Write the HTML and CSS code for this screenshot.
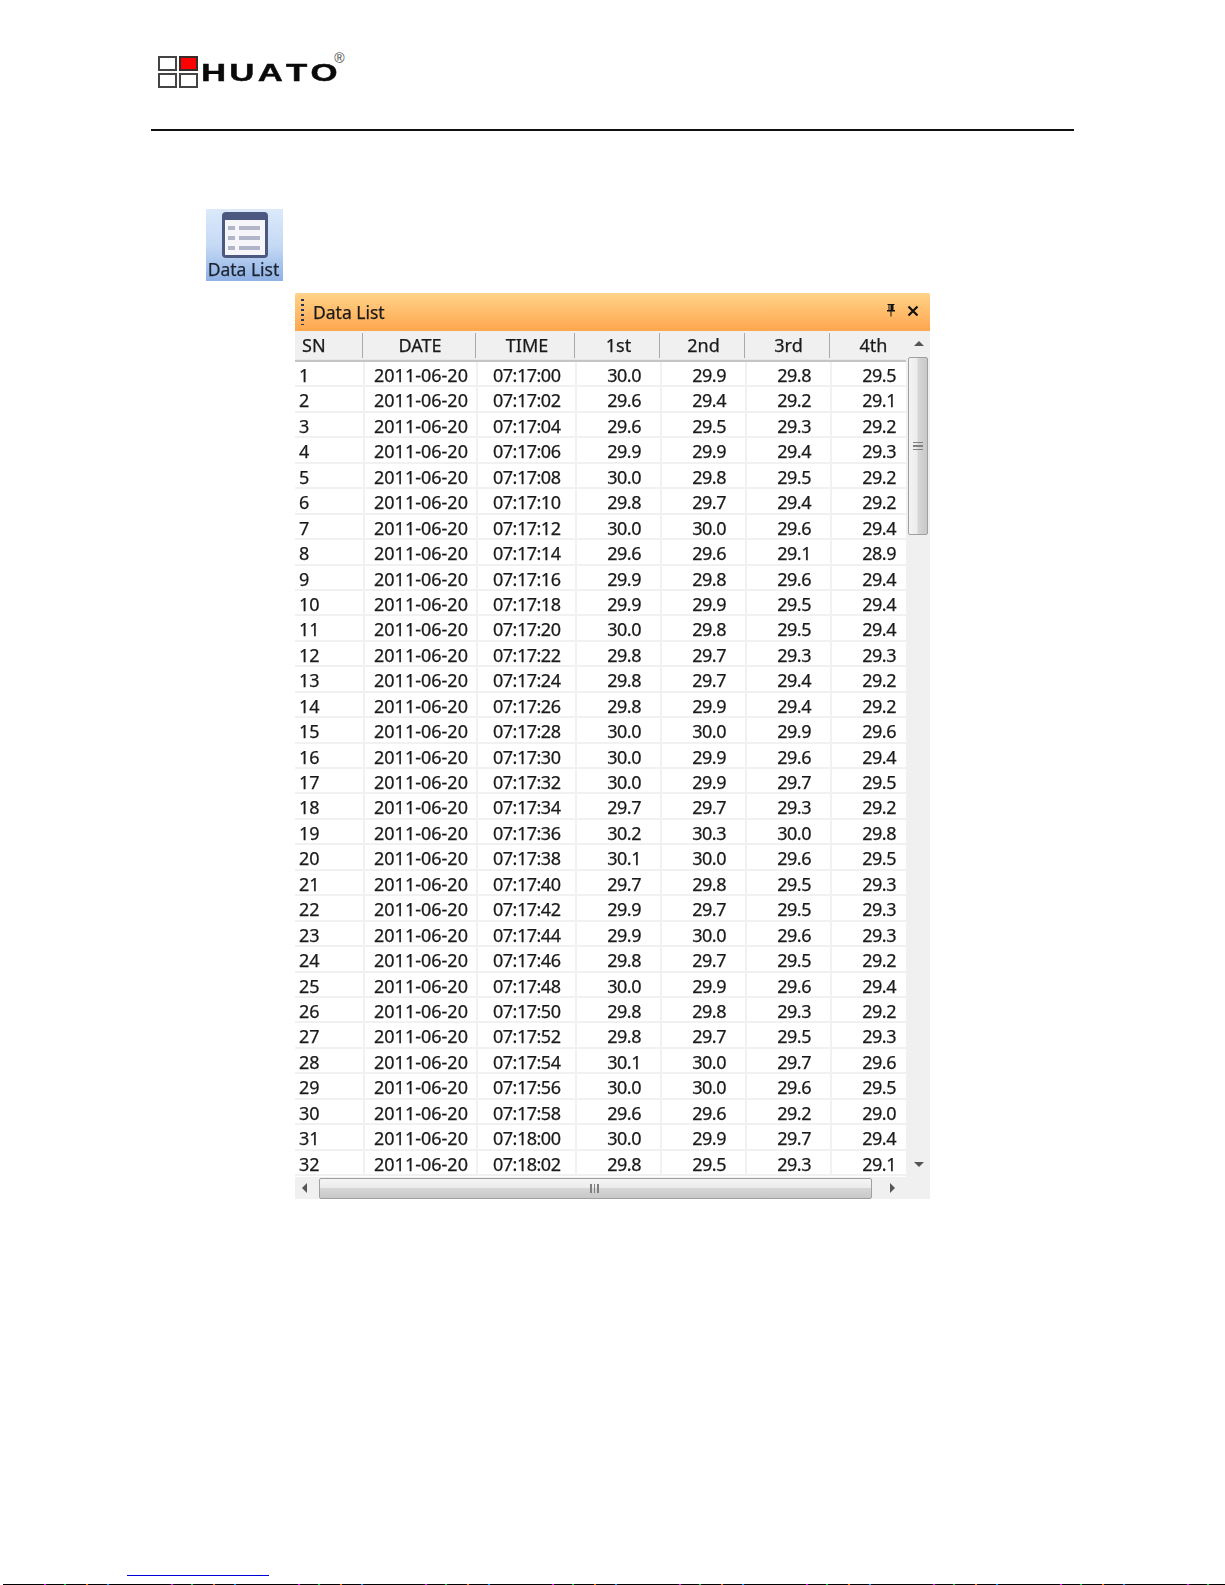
FILE: index.html
```html
<!DOCTYPE html>
<html lang="en">
<head>
<meta charset="utf-8">
<title>Data List</title>
<link rel="stylesheet" href="styles.css">
</head>
<body>
<div class="page">
  <header class="brand">
    <div class="squares"><i></i><i class="red"></i><i></i><i></i></div>
    <span class="brand-name">HUAT<span class="brand-end">O</span></span>
    <span class="reg">®</span>
  </header>
  <div class="rule"></div>
  <div class="tile">
    <svg class="tile-icon" viewBox="0 0 46 46" width="46" height="46">
      <rect x="0" y="0" width="46" height="46" rx="4" fill="#4d5880"/>
      <rect x="3" y="8" width="40" height="35" fill="#f6f6fa"/>
      <g fill="#b1b5c9">
        <rect x="6" y="14" width="7" height="4"/><rect x="17" y="14" width="21" height="4"/>
        <rect x="6" y="24" width="7" height="4"/><rect x="17" y="24" width="21" height="4"/>
        <rect x="6" y="34" width="7" height="4"/><rect x="17" y="34" width="21" height="4"/>
      </g>
    </svg>
    <span class="tile-label">Data List</span>
  </div>
  <section class="panel">
    <div class="titlebar">
      <span class="grip"></span>
      <span class="title">Data List</span>
      <svg class="pin" viewBox="0 0 12 14" width="12" height="14"><path d="M2.500 1h7v1h-1v5h1.500v1.500h-3.500v5h-1v-5h-3.500v-1.500h1.500v-5h-1zM4.500 2v5h1v-5z" fill="#111"/></svg>
      <svg class="close" viewBox="0 0 12 12" width="12" height="12"><path d="M1.500 1.500l9 9M10.500 1.500l-9 9" stroke="#111" stroke-width="2.200" fill="none"/></svg>
    </div>
    <div class="body">
      <div class="grid">
        <div class="head">
          <span class="hc hc-sn">SN</span><span class="hc hc-date">DATE</span><span class="hc hc-time">TIME</span><span class="hc hc-n">1st</span><span class="hc hc-n">2nd</span><span class="hc hc-n">3rd</span><span class="hc hc-n">4th</span>
        </div>
        <div class="row"><span>1</span><span>2011-06-20</span><span>07:17:00</span><span>30.0</span><span>29.9</span><span>29.8</span><span>29.5</span></div>
        <div class="row"><span>2</span><span>2011-06-20</span><span>07:17:02</span><span>29.6</span><span>29.4</span><span>29.2</span><span>29.1</span></div>
        <div class="row"><span>3</span><span>2011-06-20</span><span>07:17:04</span><span>29.6</span><span>29.5</span><span>29.3</span><span>29.2</span></div>
        <div class="row"><span>4</span><span>2011-06-20</span><span>07:17:06</span><span>29.9</span><span>29.9</span><span>29.4</span><span>29.3</span></div>
        <div class="row"><span>5</span><span>2011-06-20</span><span>07:17:08</span><span>30.0</span><span>29.8</span><span>29.5</span><span>29.2</span></div>
        <div class="row"><span>6</span><span>2011-06-20</span><span>07:17:10</span><span>29.8</span><span>29.7</span><span>29.4</span><span>29.2</span></div>
        <div class="row"><span>7</span><span>2011-06-20</span><span>07:17:12</span><span>30.0</span><span>30.0</span><span>29.6</span><span>29.4</span></div>
        <div class="row"><span>8</span><span>2011-06-20</span><span>07:17:14</span><span>29.6</span><span>29.6</span><span>29.1</span><span>28.9</span></div>
        <div class="row"><span>9</span><span>2011-06-20</span><span>07:17:16</span><span>29.9</span><span>29.8</span><span>29.6</span><span>29.4</span></div>
        <div class="row"><span>10</span><span>2011-06-20</span><span>07:17:18</span><span>29.9</span><span>29.9</span><span>29.5</span><span>29.4</span></div>
        <div class="row"><span>11</span><span>2011-06-20</span><span>07:17:20</span><span>30.0</span><span>29.8</span><span>29.5</span><span>29.4</span></div>
        <div class="row"><span>12</span><span>2011-06-20</span><span>07:17:22</span><span>29.8</span><span>29.7</span><span>29.3</span><span>29.3</span></div>
        <div class="row"><span>13</span><span>2011-06-20</span><span>07:17:24</span><span>29.8</span><span>29.7</span><span>29.4</span><span>29.2</span></div>
        <div class="row"><span>14</span><span>2011-06-20</span><span>07:17:26</span><span>29.8</span><span>29.9</span><span>29.4</span><span>29.2</span></div>
        <div class="row"><span>15</span><span>2011-06-20</span><span>07:17:28</span><span>30.0</span><span>30.0</span><span>29.9</span><span>29.6</span></div>
        <div class="row"><span>16</span><span>2011-06-20</span><span>07:17:30</span><span>30.0</span><span>29.9</span><span>29.6</span><span>29.4</span></div>
        <div class="row"><span>17</span><span>2011-06-20</span><span>07:17:32</span><span>30.0</span><span>29.9</span><span>29.7</span><span>29.5</span></div>
        <div class="row"><span>18</span><span>2011-06-20</span><span>07:17:34</span><span>29.7</span><span>29.7</span><span>29.3</span><span>29.2</span></div>
        <div class="row"><span>19</span><span>2011-06-20</span><span>07:17:36</span><span>30.2</span><span>30.3</span><span>30.0</span><span>29.8</span></div>
        <div class="row"><span>20</span><span>2011-06-20</span><span>07:17:38</span><span>30.1</span><span>30.0</span><span>29.6</span><span>29.5</span></div>
        <div class="row"><span>21</span><span>2011-06-20</span><span>07:17:40</span><span>29.7</span><span>29.8</span><span>29.5</span><span>29.3</span></div>
        <div class="row"><span>22</span><span>2011-06-20</span><span>07:17:42</span><span>29.9</span><span>29.7</span><span>29.5</span><span>29.3</span></div>
        <div class="row"><span>23</span><span>2011-06-20</span><span>07:17:44</span><span>29.9</span><span>30.0</span><span>29.6</span><span>29.3</span></div>
        <div class="row"><span>24</span><span>2011-06-20</span><span>07:17:46</span><span>29.8</span><span>29.7</span><span>29.5</span><span>29.2</span></div>
        <div class="row"><span>25</span><span>2011-06-20</span><span>07:17:48</span><span>30.0</span><span>29.9</span><span>29.6</span><span>29.4</span></div>
        <div class="row"><span>26</span><span>2011-06-20</span><span>07:17:50</span><span>29.8</span><span>29.8</span><span>29.3</span><span>29.2</span></div>
        <div class="row"><span>27</span><span>2011-06-20</span><span>07:17:52</span><span>29.8</span><span>29.7</span><span>29.5</span><span>29.3</span></div>
        <div class="row"><span>28</span><span>2011-06-20</span><span>07:17:54</span><span>30.1</span><span>30.0</span><span>29.7</span><span>29.6</span></div>
        <div class="row"><span>29</span><span>2011-06-20</span><span>07:17:56</span><span>30.0</span><span>30.0</span><span>29.6</span><span>29.5</span></div>
        <div class="row"><span>30</span><span>2011-06-20</span><span>07:17:58</span><span>29.6</span><span>29.6</span><span>29.2</span><span>29.0</span></div>
        <div class="row"><span>31</span><span>2011-06-20</span><span>07:18:00</span><span>30.0</span><span>29.9</span><span>29.7</span><span>29.4</span></div>
        <div class="row"><span>32</span><span>2011-06-20</span><span>07:18:02</span><span>29.8</span><span>29.5</span><span>29.3</span><span>29.1</span></div>
      </div>
      <div class="vscroll">
        <svg class="arrow" viewBox="0 0 10 6" width="10" height="6"><path d="M5 0l5 5H0z" fill="#555"/></svg>
        <div class="vthumb"><span class="vgrip"></span></div>
        <svg class="arrow arrow-down" viewBox="0 0 10 6" width="10" height="6"><path d="M5 5L0 0h10z" fill="#555"/></svg>
      </div>
    </div>
    <div class="hscroll">
      <svg class="arrow-l" viewBox="0 0 6 10" width="6" height="10"><path d="M0 5l5-5v10z" fill="#555"/></svg>
      <div class="hthumb"><span class="hgrip"></span></div>
      <svg class="arrow-r" viewBox="0 0 6 10" width="6" height="10"><path d="M5 5L0 0v10z" fill="#555"/></svg>
    </div>
  </section>
  <div class="footer-link"></div>
  <div class="edge"></div>
</div>
</body>
</html>
```
FILE: styles.css
```css
* { box-sizing: border-box; }
html, body { margin: 0; padding: 0; background: #fff; }
.page {
  width: 1225px;
  height: 1585px;
  overflow: hidden;
  display: flex;
  flex-direction: column;
  font-family: "Noto Sans", "Open Sans", sans-serif;
  color: #1a1a1a;
}

/* Brand */
.brand {
  display: flex;
  align-items: flex-start;
  height: 129px;
  padding: 56px 0 0 158px;
  flex: none;
}
.squares {
  display: grid;
  grid-template-columns: 19px 19px;
  grid-template-rows: 15px 15px;
  gap: 2px;
  filter: blur(.3px);
}
.squares i { display: block; border: 2px solid #444; background: #fff; }
.squares .red { background: #f00; border-color: #3a2a2a; }
.brand-name {
  font-family: "Liberation Sans", sans-serif;
  font-weight: 700;
  font-size: 24px;
  line-height: 24px;
  letter-spacing: 2.200px;
  font-kerning: none;
  white-space: nowrap;
  color: #0a0a0a;
  -webkit-text-stroke: .4px #0a0a0a;
  margin: 5px 0 0 2.600px;
  width: 91.300px;
  flex: none;
  transform: scaleX(1.450);
  transform-origin: left top;
}
.brand-end { letter-spacing: -2px; }
.reg {
  font-family: "Liberation Sans", sans-serif;
  font-size: 14px;
  line-height: 14px;
  color: #444;
  margin: -5px 0 0 42.400px;
}
.rule {
  flex: none;
  height: 2px;
  margin: 0 151px;
  background: #111;
}

/* Tile */
.tile {
  flex: none;
  width: 77px;
  height: 72px;
  margin: 78px 0 0 206px;
  background: linear-gradient(#dbe9fb, #c6daf5 50%, #8fb1e5);
  display: flex;
  flex-direction: column;
  align-items: center;
  filter: blur(.4px);
}
.tile-icon { margin-top: 3px; flex: none; }
.tile-label {
  font-size: 17.500px;
  line-height: 22px;
  white-space: nowrap;
  color: #1c2430;
  margin-left: -2px;
  -webkit-text-stroke: .25px #1c2430;
}

/* Panel */
.panel {
  flex: none;
  width: 635px;
  height: 906px;
  margin: 12px 0 0 295px;
  display: flex;
  flex-direction: column;
  background: #f2f2f2;
  filter: blur(.3px);
}
.titlebar {
  flex: none;
  height: 38px;
  display: flex;
  align-items: center;
  padding: 0 11px 0 6px;
  background: linear-gradient(#ffd389, #ffa64e);
  border-radius: 2px 2px 0 0;
}
.grip {
  width: 3px;
  height: 26px;
  background: repeating-linear-gradient(#2a3358 0 2px, transparent 2px 5px);
}
.title {
  margin-left: 9px;
  font-size: 17.500px;
  line-height: 24px;
  flex: 1;
  -webkit-text-stroke: .25px #1a1a1a;
}
.pin { margin-right: 10px; margin-top: -4px; }
.close { margin-top: -3px; }
.body { flex: 1; display: flex; min-height: 0; }
.grid { width: 611px; flex: none; background: #fff; overflow: hidden; }
.head {
  height: 31px;
  display: grid;
  grid-template-columns: 67.500px 113px 99px 85px 85px 85px 85px;
  background: #f0f0f0;
  border-bottom: 2px solid #c4c4c4;
  box-shadow: inset 0 -1px 0 #e8e8e8;
  overflow: hidden;
  white-space: nowrap;
}
.hc {
  font-size: 18px;
  line-height: 29px;
  text-align: center;
  position: relative;
  -webkit-text-stroke: .25px #1a1a1a;
}
.hc::after {
  content: "";
  position: absolute;
  right: 0;
  top: 2px;
  bottom: 2px;
  width: 1px;
  background: #a9a9a9;
}
.hc-sn { text-align: left; padding-left: 7px; }
.hc-date { padding-left: 2px; }
.hc-time { padding-left: 4px; }
.hc-n { padding-left: 3px; }
.hc-n:last-child::after { display: none; }
.row {
  height: 25.450px;
  display: grid;
  grid-template-columns: 70px 113px 99px 85px 85px 85px 85px;
  border-bottom: 2px solid #f1f1f1;
  overflow: hidden;
  white-space: nowrap;
  font-size: 18px;
  line-height: 24px;
  -webkit-text-stroke: .25px #1a1a1a;
}
.row span {
  border-right: 2px solid #f1f1f1;
  text-align: right;
  padding: 1px 19px 0 0;
  letter-spacing: -.5px;
}
.row span:nth-child(1) { text-align: left; padding: 1px 0 0 4px; letter-spacing: 0; }
.row span:nth-child(2) { text-align: left; padding: 1px 0 0 9px; letter-spacing: 0; }
.row span:nth-child(3) { text-align: left; padding: 1px 0 0 15px; }

/* Scrollbars */
.vscroll {
  flex: 1;
  display: flex;
  flex-direction: column;
  align-items: center;
  background: #f0f0f0;
  padding-top: 10px;
}
.arrow { flex: none; margin-left: 1px; }
.vthumb {
  flex: none;
  width: 20px;
  height: 178px;
  margin: 10px 0 0 0;
  border: 1px solid #a0a0a0;
  border-radius: 2px;
  background: linear-gradient(90deg, #f4f4f4, #ececec 45%, #d6d6d6 50%, #c8c8c8);
  display: flex;
  align-items: center;
  justify-content: center;
}
.vgrip {
  width: 10px;
  height: 9px;
  background: repeating-linear-gradient(#808080 0 1.500px, transparent 1.500px 3.500px);
}
.arrow-down { margin-top: auto; margin-bottom: 9px; }
.hscroll {
  flex: none;
  height: 22px;
  display: flex;
  align-items: center;
  background: #f0f0f0;
  padding: 0 0 0 7px;
}
.arrow-l { flex: none; }
.hthumb {
  flex: none;
  width: 553px;
  height: 21px;
  margin: 0 0 0 11px;
  border: 1px solid #a0a0a0;
  border-radius: 2px;
  background: linear-gradient(#f4f4f4, #ececec 45%, #d6d6d6 50%, #c8c8c8);
  display: flex;
  align-items: center;
  justify-content: center;
}
.hgrip {
  width: 9px;
  height: 9px;
  margin-right: 2px;
  background: repeating-linear-gradient(90deg, #808080 0 1.500px, transparent 1.500px 3.500px);
}
.arrow-r { flex: none; margin-left: 18px; }

/* Page foot */
.footer-link {
  flex: none;
  width: 142px;
  height: 1px;
  margin: 376px 0 0 127px;
  background: #0000d8;
}
.edge {
  flex: none;
  height: 1px;
  margin: 8px 0 0 3px;
  background:
    repeating-linear-gradient(90deg, #000 0 41px, #e0f 41px 43px, #000 43px 61px, #0c4 61px 63px, #000 63px 83px, #f70 83px 85px, #000 85px 104px, #09f 104px 106px, #000 106px 127px);
}
```
